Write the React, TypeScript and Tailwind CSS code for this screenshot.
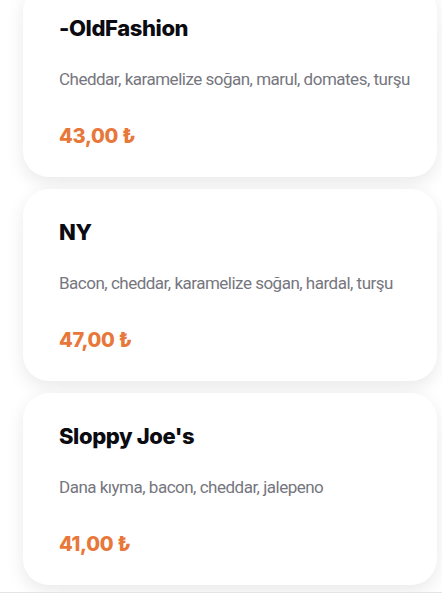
import React from "react";

const items = [
  { name: "-OldFashion", desc: "Cheddar, karamelize soğan, marul, domates, turşu", price: "43,00 ₺" },
  { name: "NY", desc: "Bacon, cheddar, karamelize soğan, hardal, turşu", price: "47,00 ₺" },
  { name: "Sloppy Joe's", desc: "Dana kıyma, bacon, cheddar, jalepeno", price: "41,00 ₺" },
];

export default function App() {
  return (
    <div className="w-[442px] h-[600px] overflow-hidden bg-white flex flex-col">
      <div className="flex flex-col gap-[12px] pl-[23px] pr-[5px] -mt-[15px]">
        {items.map((it) => (
          <div
            key={it.name}
            className="h-[192px] shrink-0 rounded-[26px] bg-white shadow-[0_6px_18px_rgba(0,0,0,0.09)] pl-[36px] pt-[29px] flex flex-col"
          >
            <div className="text-[22px] leading-[28px] font-extrabold text-[#0b0b12] font-['Inter',sans-serif] tracking-[-0.4px]">
              {it.name}
            </div>
            <div className="mt-[26px] text-[17px] leading-[22px] text-[#76767e] font-['Roboto',sans-serif] tracking-[-0.5px]">
              {it.desc}
            </div>
            <div className="mt-[34px] text-[20px] leading-[24px] font-extrabold text-[#e8773a] font-['Inter',sans-serif] tracking-[-0.3px]">
              {it.price}
            </div>
          </div>
        ))}
      </div>
      <div className="mt-auto h-[8px] border-t border-[#e4e4e4] bg-white" />
    </div>
  );
}
